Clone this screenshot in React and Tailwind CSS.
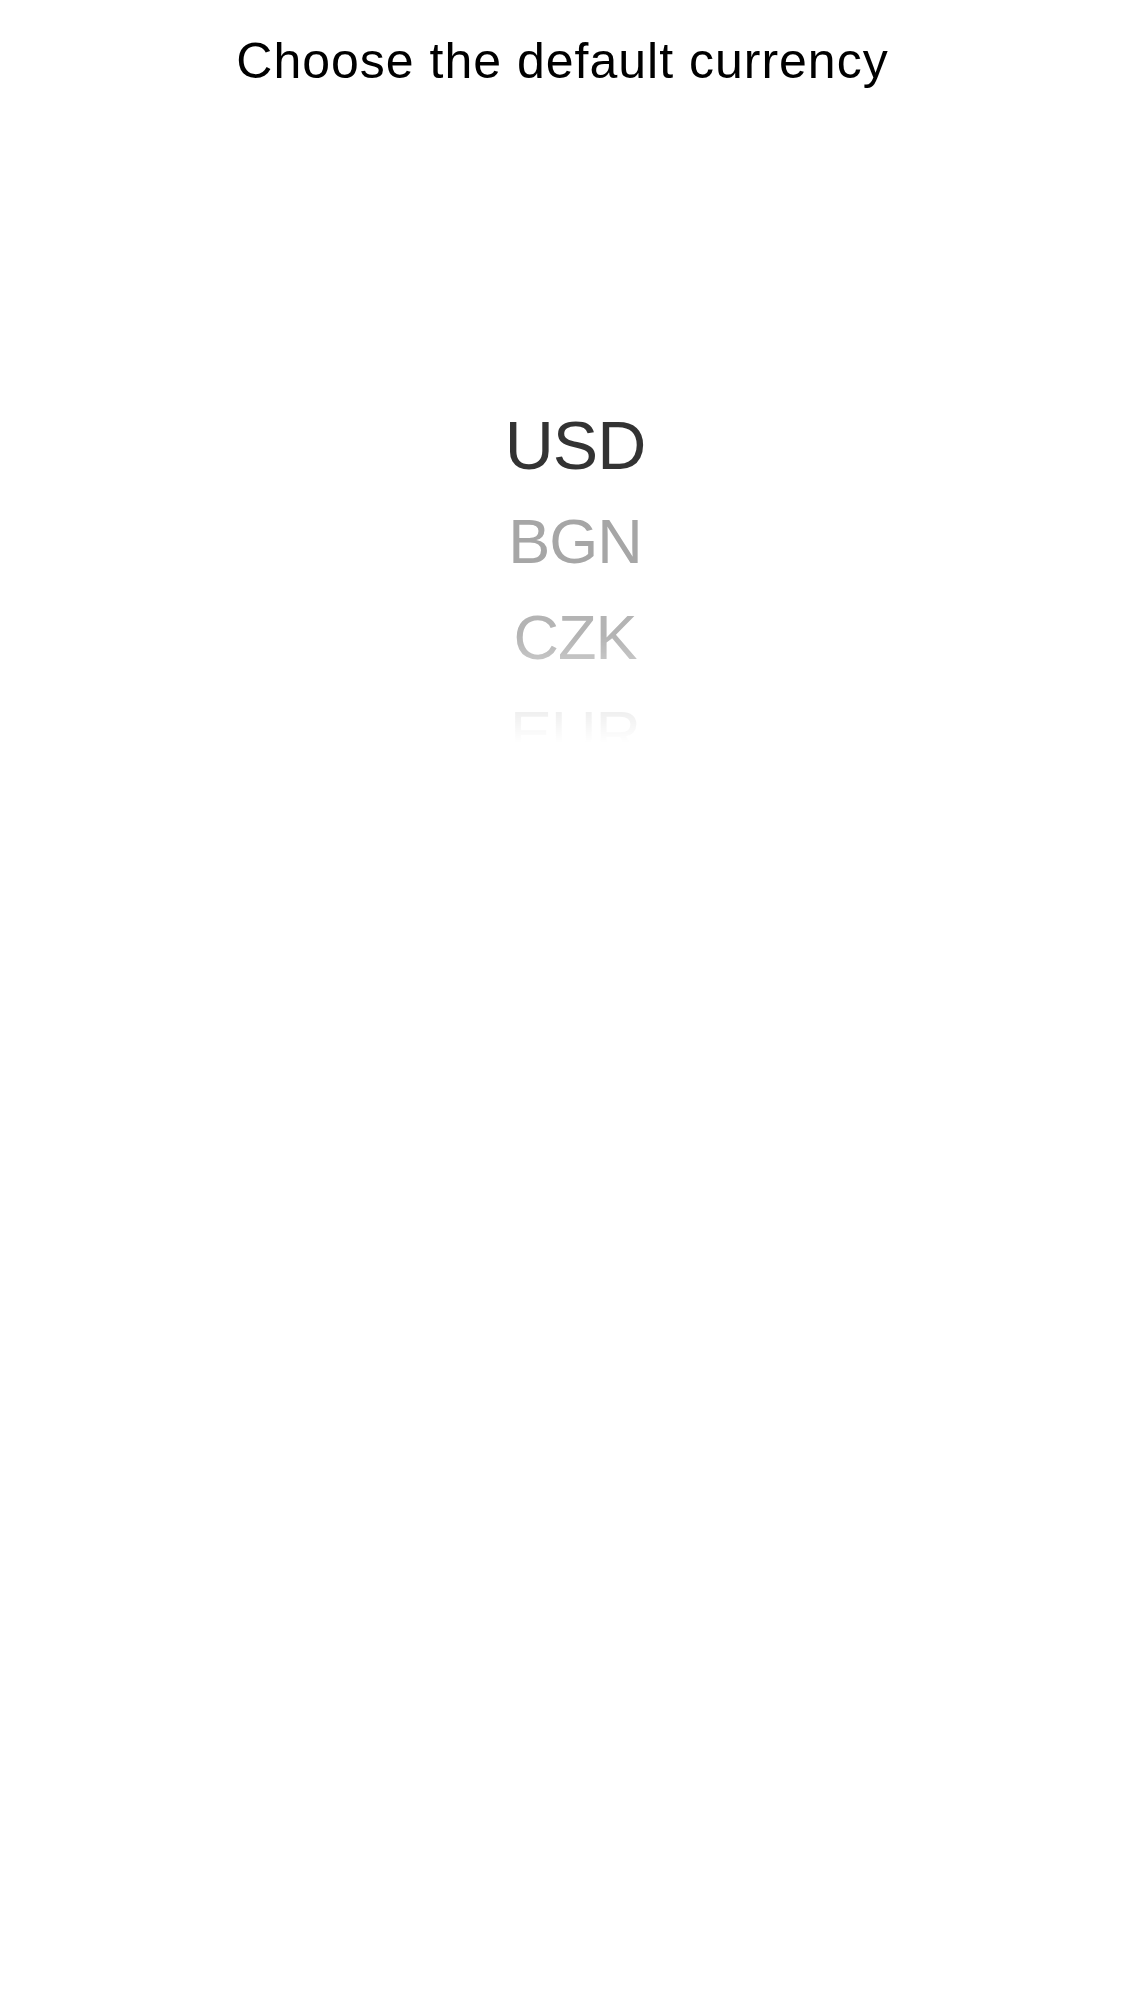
import React from 'react';

const currencies = [
    { code: 'USD', className: 'text-[68px] text-[#333333]' },
    { code: 'BGN', className: 'text-[63px] text-[#a6a6a6]' },
    { code: 'CZK', className: 'text-[63px] text-[#b4b4b4]' },
    { code: 'EUR', className: 'text-[63px] text-[#c8c8c8]' },
];

const App = () => {
    return (
        <div className="min-h-screen w-full bg-white flex flex-col items-center font-['Liberation_Sans',Arial,sans-serif]">
            <h1 className="pt-[31px] text-[50px] leading-[60px] tracking-[1px] text-black font-normal text-center">
                Choose the default currency
            </h1>

            {/* currency wheel, selected row on top */}
            <div className="mt-[306px] w-full flex justify-center pl-[25px]">
                <div className="h-[384px] w-[400px] flex flex-col items-center [mask-image:linear-gradient(to_bottom,black_0%,black_62%,transparent_90%)]">
                    {currencies.map((c) => (
                        <div
                            key={c.code}
                            className={`h-[96px] shrink-0 leading-[96px] tracking-[-1px] ${c.className}`}
                        >
                            {c.code}
                        </div>
                    ))}
                </div>
            </div>
        </div>
    );
};

export default App;
